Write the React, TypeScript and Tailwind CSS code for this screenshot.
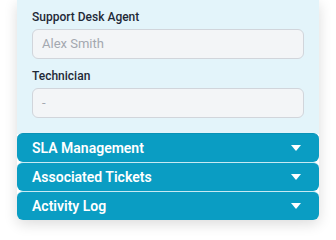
const SECTIONS = ["SLA Management", "Associated Tickets", "Activity Log"];

function Caret() {
	return (
		<svg width="10" height="6" viewBox="0 0 10 6" className="shrink-0">
			<path d="M0 0 L10 0 L5 6 Z" fill="#ffffff" />
		</svg>
	);
}

function Field({ label, value }: { label: string; value: string }) {
	return (
		<div className="flex flex-col">
			<label className="text-[12px] leading-4 font-medium text-[#1f2937]">{label}</label>
			<div className="mt-1 h-[30px] rounded-md border border-[#d1d5db] bg-[#f3f5f7] px-[9px] flex items-center text-[13px] text-[#a3a8b0]">
				{value}
			</div>
		</div>
	);
}

export default function App() {
	return (
		<div
			className="w-[336px] h-[240px] bg-white overflow-hidden px-[17px]"
			style={{ fontFamily: "Roboto, 'Liberation Sans', sans-serif" }}
		>
			<div className="rounded-b-md shadow-[0_4px_14px_rgba(0,0,0,0.14)]">
				<div className="bg-[#e3f4fa] px-[15px] pt-[9px] pb-[16px] flex flex-col gap-[9px]">
					<Field label="Support Desk Agent" value="Alex Smith" />
					<Field label="Technician" value="-" />
				</div>
				<div className="flex flex-col">
					{SECTIONS.map((s, i) => (
						<div
							key={s}
							className={`h-[29px] rounded-md bg-[#0a9dc3] flex items-center justify-between pl-[15px] pr-[18px] ${
								i > 0 ? "border-t border-[#c7eaf3]" : "-mt-[1px] border-t border-[#0a93b7]"
							}`}
						>
							<span className="text-[14px] font-semibold text-white">{s}</span>
							<Caret />
						</div>
					))}
				</div>
			</div>
		</div>
	);
}
